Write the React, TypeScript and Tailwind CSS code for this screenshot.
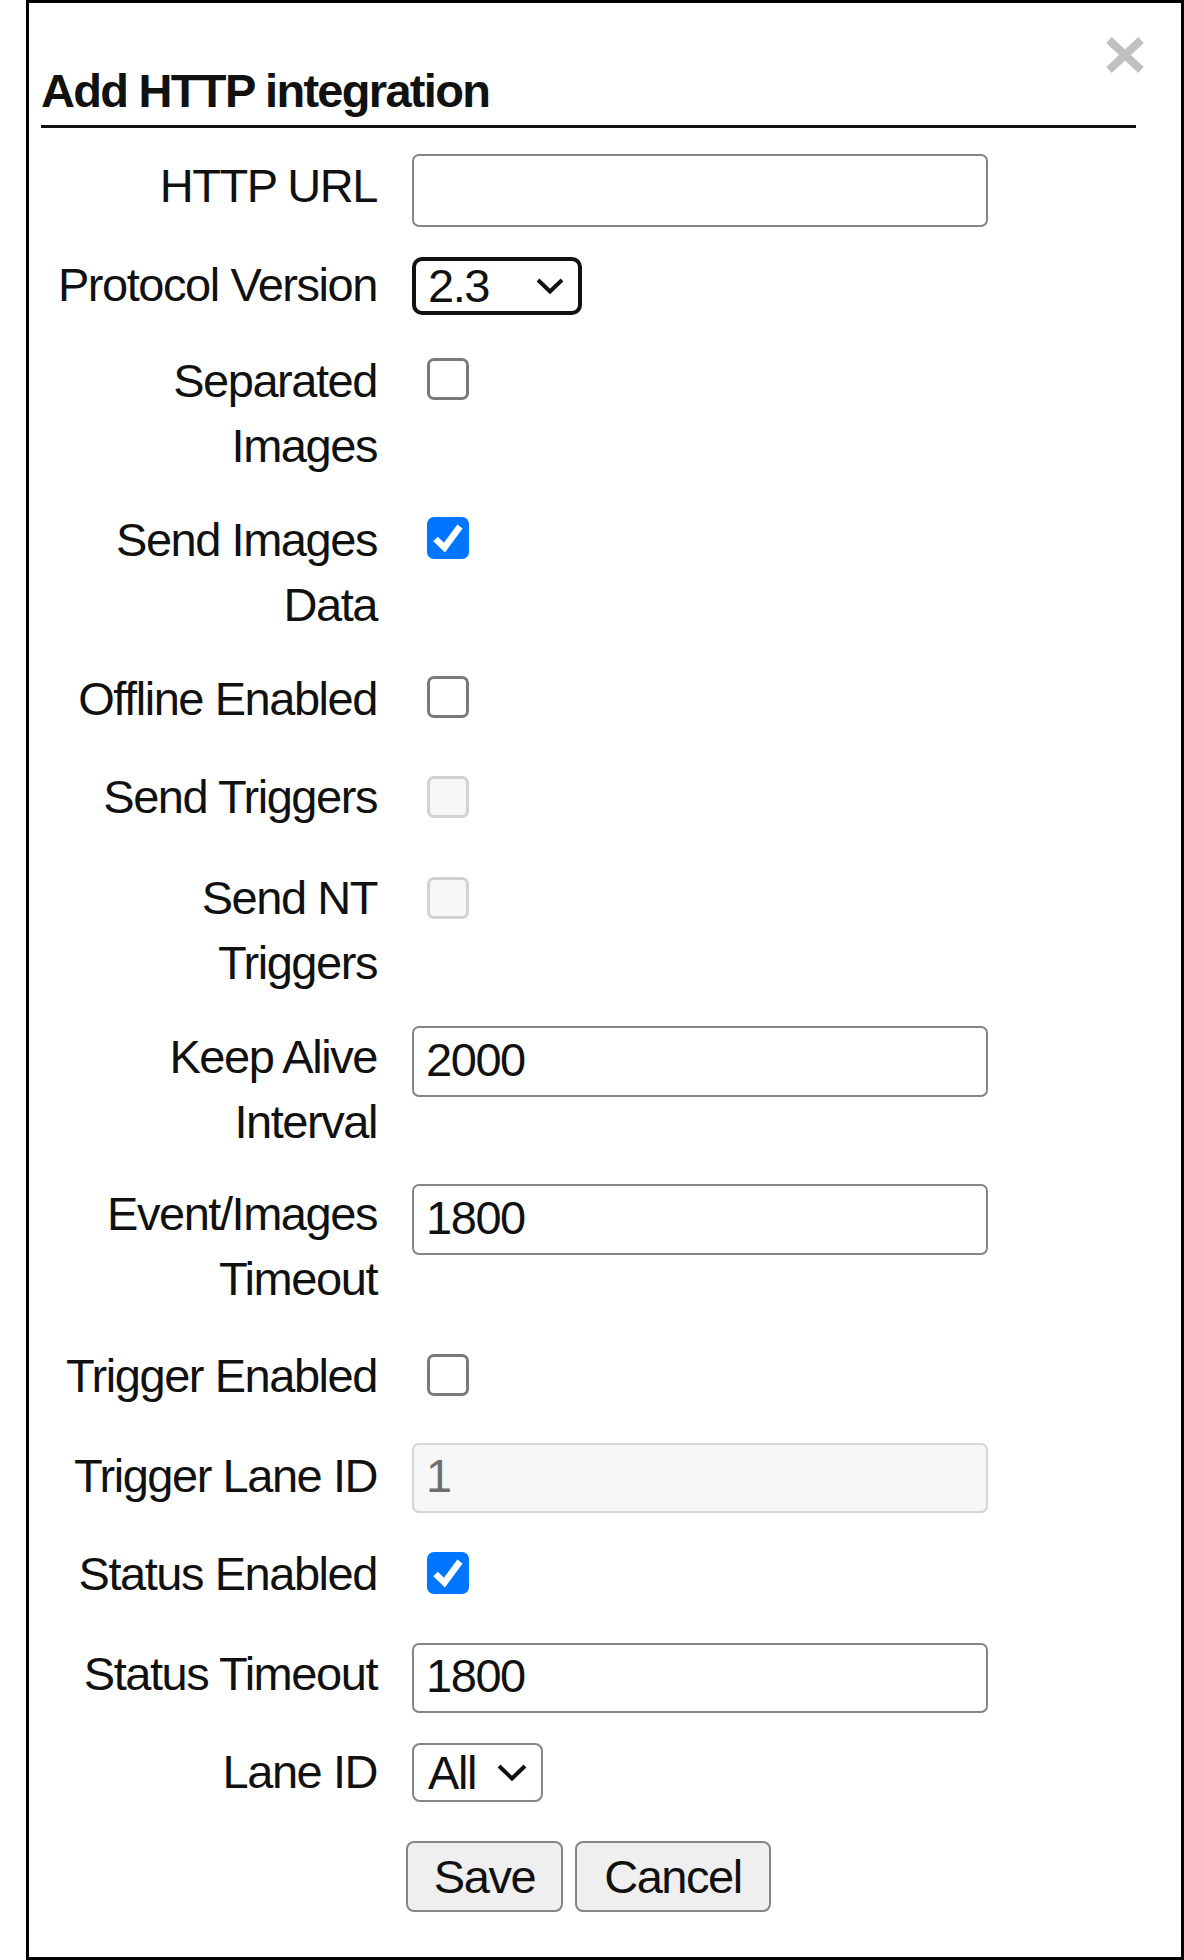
import React from "react";

function Row({
  h,
  lines,
  children,
}: {
  h: string;
  lines: string[];
  children: React.ReactNode;
}) {
  return (
    <div className={`flex items-start ${h}`}>
      <div className="w-[348px] shrink-0 text-right">
        {lines.map((l) => (
          <div key={l} className="whitespace-nowrap">
            {l}
          </div>
        ))}
      </div>
      <div className="ml-[35px]">{children}</div>
    </div>
  );
}

function Check({ state, mt }: { state: "off" | "on" | "disabled"; mt: string }) {
  if (state === "on") {
    return (
      <div className={`${mt} ml-[15px] flex h-[42px] w-[42px] items-center justify-center rounded-[7px] bg-[#0075ff]`}>
        <svg width="42" height="42" viewBox="0 0 42 42">
          <path d="M8.5 22 L17.5 30.5 L33 9.5" fill="none" stroke="#ffffff" strokeWidth="6.5" />
        </svg>
      </div>
    );
  }
  if (state === "disabled") {
    return (
      <div className={`${mt} ml-[15px] h-[42px] w-[42px] rounded-[7px] border-[3px] border-[#d2d2d2] bg-[#f6f6f6]`} />
    );
  }
  return <div className={`${mt} ml-[15px] h-[42px] w-[42px] rounded-[7px] border-[3px] border-[#7a7a7a] bg-white`} />;
}

function TextInput({
  value,
  cls,
  disabled,
}: {
  value: string;
  cls: string;
  disabled?: boolean;
}) {
  return (
    <input
      type="text"
      defaultValue={value}
      disabled={disabled}
      className={`${cls} block w-[576px] rounded-[7px] border-2 pl-[12px] pt-0 leading-normal outline-none ${
        disabled
          ? "border-[#d6d6d6] bg-[#f6f6f6] text-[#6d6d6d]"
          : "border-[#858585] bg-white text-[#111]"
      }`}
    />
  );
}

export default function App() {
  return (
    <div className="min-h-[1960px] w-[1184px] bg-white font-['Liberation_Sans',Arial,sans-serif] text-[47px] leading-[65px] tracking-[-1.45px] text-[#111]">
      <div className="relative ml-[26px] h-[1960px] w-[1158px] border-[3px] border-black bg-white">
        <button className="absolute right-[36px] top-[33px] h-[38px] w-[40px]" aria-label="Close">
          <svg width="40" height="38" viewBox="0 0 40 38">
            <path d="M4 4 L36 34 M36 4 L4 34" stroke="#c0c0c0" strokeWidth="8" fill="none" />
          </svg>
        </button>

        <div className="ml-[12px] mr-[45px] mt-[61px] border-b-[3px] border-[#111] pb-[7px]">
          <h2 className="text-[47px] font-bold leading-[54px] tracking-[-1.7px]">Add HTTP integration</h2>
        </div>

        <div className="mt-[25px] flex flex-col">
          <Row h="h-[99px]" lines={["HTTP URL"]}>
            <TextInput value="" cls="mt-[1px] h-[73px] pb-[6px]" />
          </Row>

          <Row h="h-[96px]" lines={["Protocol Version"]}>
            <div className="mt-[5px] flex h-[58px] w-[170px] items-center rounded-[10px] border-[4px] border-[#111] pl-[12px] pr-[14px]">
              <span className="leading-[50px]">2.3</span>
              <svg className="ml-auto" width="28" height="16" viewBox="0 0 28 16">
                <path d="M2 2 L14 13.5 L26 2" fill="none" stroke="#111" strokeWidth="4" />
              </svg>
            </div>
          </Row>

          <Row h="h-[159px]" lines={["Separated", "Images"]}>
            <Check state="off" mt="mt-[10px]" />
          </Row>

          <Row h="h-[159px]" lines={["Send Images", "Data"]}>
            <Check state="on" mt="mt-[10px]" />
          </Row>

          <Row h="h-[98px]" lines={["Offline Enabled"]}>
            <Check state="off" mt="mt-[10px]" />
          </Row>

          <Row h="h-[101px]" lines={["Send Triggers"]}>
            <Check state="disabled" mt="mt-[12px]" />
          </Row>

          <Row h="h-[159px]" lines={["Send NT", "Triggers"]}>
            <Check state="disabled" mt="mt-[12px]" />
          </Row>

          <Row h="h-[157px]" lines={["Keep Alive", "Interval"]}>
            <TextInput value="2000" cls="mt-[2px] h-[71px] pb-[5px]" />
          </Row>

          <Row h="h-[162px]" lines={["Event/Images", "Timeout"]}>
            <TextInput value="1800" cls="mt-[3px] h-[71px] pb-[5px]" />
          </Row>

          <Row h="h-[100px]" lines={["Trigger Enabled"]}>
            <Check state="off" mt="mt-[11px]" />
          </Row>

          <Row h="h-[98px]" lines={["Trigger Lane ID"]}>
            <TextInput value="1" disabled cls="mt-0 h-[70px] pb-[3px]" />
          </Row>

          <Row h="h-[100px]" lines={["Status Enabled"]}>
            <Check state="on" mt="mt-[11px]" />
          </Row>

          <Row h="h-[98px]" lines={["Status Timeout"]}>
            <TextInput value="1800" cls="mt-[2px] h-[70px] pb-[3px]" />
          </Row>

          <Row h="h-[102px]" lines={["Lane ID"]}>
            <div className="mt-[4px] flex h-[59px] w-[131px] items-center rounded-[8px] border-2 border-[#858585] pl-[14px] pr-[14px]">
              <span className="leading-[55px]">All</span>
              <svg className="ml-auto" width="30" height="19" viewBox="0 0 30 19">
                <path d="M2 3 L15 15.5 L28 3" fill="none" stroke="#111" strokeWidth="4" />
              </svg>
            </div>
          </Row>

          <div className="ml-[377px] flex gap-[12px]">
            <button className="h-[71px] w-[157px] rounded-[8px] border-2 border-[#858585] bg-[#efefef] leading-[65px] text-[#111]">
              Save
            </button>
            <button className="h-[71px] w-[196px] rounded-[8px] border-2 border-[#858585] bg-[#efefef] leading-[65px] text-[#111]">
              Cancel
            </button>
          </div>
        </div>
      </div>
    </div>
  );
}
